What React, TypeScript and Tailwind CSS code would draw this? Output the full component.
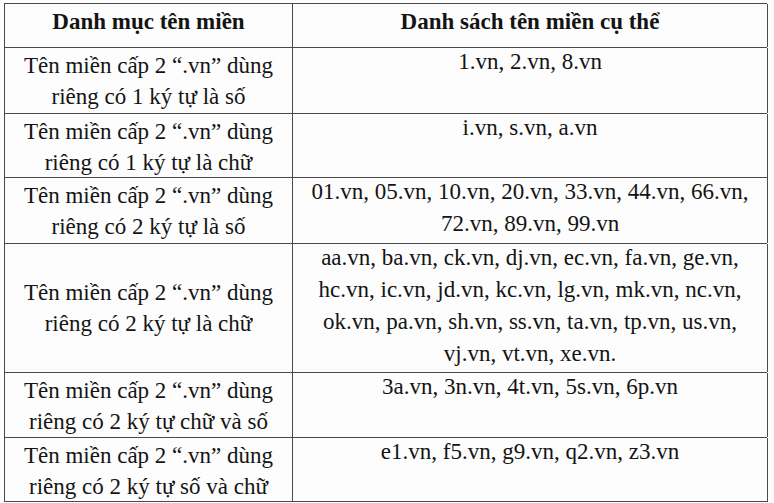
const rows: { left: string[]; right: string[]; h: string; center?: boolean }[] = [
  {
    left: ['Tên miền cấp 2 “.vn” dùng', 'riêng có 1 ký tự là số'],
    right: ['1.vn, 2.vn, 8.vn'],
    h: 'h-[66px]'
  },
  {
    left: ['Tên miền cấp 2 “.vn” dùng', 'riêng có 1 ký tự là chữ'],
    right: ['i.vn, s.vn, a.vn'],
    h: 'h-[64px]'
  },
  {
    left: ['Tên miền cấp 2 “.vn” dùng', 'riêng có 2 ký tự là số'],
    right: ['01.vn, 05.vn, 10.vn, 20.vn, 33.vn, 44.vn, 66.vn,', '72.vn, 89.vn, 99.vn'],
    h: 'h-[66px]'
  },
  {
    left: ['Tên miền cấp 2 “.vn” dùng', 'riêng có 2 ký tự là chữ'],
    right: [
      'aa.vn, ba.vn, ck.vn, dj.vn, ec.vn, fa.vn, ge.vn,',
      'hc.vn, ic.vn, jd.vn, kc.vn, lg.vn, mk.vn, nc.vn,',
      'ok.vn, pa.vn, sh.vn, ss.vn, ta.vn, tp.vn, us.vn,',
      'vj.vn, vt.vn, xe.vn.'
    ],
    h: 'h-[129px]',
    center: true
  },
  {
    left: ['Tên miền cấp 2 “.vn” dùng', 'riêng có 2 ký tự chữ và số'],
    right: ['3a.vn, 3n.vn, 4t.vn, 5s.vn, 6p.vn'],
    h: 'h-[65px]'
  },
  {
    left: ['Tên miền cấp 2 “.vn” dùng', 'riêng có 2 ký tự số và chữ'],
    right: ['e1.vn, f5.vn, g9.vn, q2.vn, z3.vn'],
    h: 'h-[64px]'
  }
]

export default function App() {
  return (
    <div className="h-[503px] w-[774px] overflow-hidden bg-[#fdfdfd] pl-[4px] pt-[3px] font-[family-name:Liberation_Serif] text-[23px] leading-[31px] text-[#141414]">
      <div className="w-[763px] border-l border-t border-[#4a4a4a]">
        <div className="grid h-[44px] grid-cols-[288px_475px] border-b border-[#4a4a4a]">
          <div className="flex items-center justify-center border-r border-[#4a4a4a] pb-[8px] font-bold">
            Danh mục tên miền
          </div>
          <div className="flex items-center justify-center border-r border-[#4a4a4a] pb-[8px] font-bold">
            Danh sách tên miền cụ thể
          </div>
        </div>
        {rows.map((row, i) => (
          <div
            key={i}
            className={`grid grid-cols-[288px_475px] border-b border-[#4a4a4a] ${row.h}`}
          >
            <div
              className={`flex flex-col items-center border-r border-[#4a4a4a] ${row.center ? 'justify-center' : 'pt-[2px]'}`}
            >
              {row.left.map((l) => (
                <span key={l} className="whitespace-nowrap">
                  {l}
                </span>
              ))}
            </div>
            <div className="border-r border-[#4a4a4a]">
              <div className="-mt-[2px] flex flex-col items-center leading-[32px]">
                {row.right.map((r) => (
                  <span key={r} className="whitespace-nowrap">
                    {r}
                  </span>
                ))}
              </div>
            </div>
          </div>
        ))}
      </div>
    </div>
  )
}
